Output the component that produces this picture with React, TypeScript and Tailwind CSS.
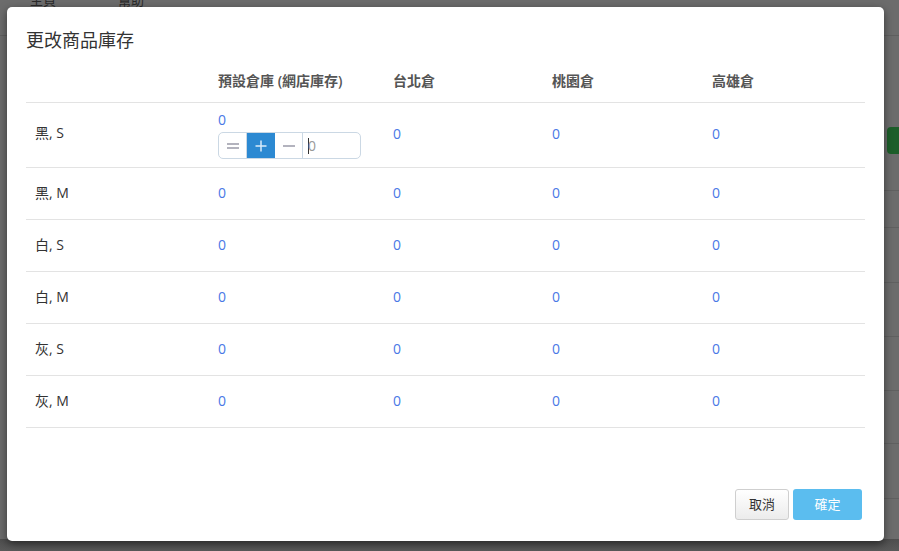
import React from "react";

const cols = ["預設倉庫 (網店庫存)", "台北倉", "桃園倉", "高雄倉"];
const rows = ["黑, S", "黑, M", "白, S", "白, M", "灰, S", "灰, M"];

function Num() {
  return <span className="text-[#4a78e6]">0</span>;
}

export default function App() {
  return (
    <div
      className="relative w-[899px] h-[551px] overflow-hidden bg-[#6c6c6c]"
      style={{ fontFamily: '"Open Sans", "Noto Sans CJK TC", sans-serif' }}
    >
      {/* background page hints */}
      <div className="absolute left-0 top-0 w-full h-[36px] border-b border-[#5f5f5f]" />
      <div className="absolute left-[30px] -top-[9px] text-[13px] text-[#2a2a2a]">主頁</div>
      <div className="absolute left-[118px] -top-[9px] text-[13px] text-[#2a2a2a]">幫助</div>
      <div className="absolute right-0 top-[127px] w-[12px] h-[27px] rounded-l-[4px] bg-[#1d5e2a]" />
      <div className="absolute right-0 top-[190px] w-[20px] border-t border-[#606060]" />
      <div className="absolute right-0 top-[227px] w-[20px] border-t border-[#606060]" />
      <div className="absolute right-0 top-[282px] w-[20px] border-t border-[#606060]" />
      <div className="absolute right-0 top-[336px] w-[20px] border-t border-[#606060]" />
      <div className="absolute right-0 top-[390px] w-[20px] border-t border-[#606060]" />
      <div className="absolute right-0 top-[443px] w-[20px] border-t border-[#606060]" />
      <div className="absolute right-0 top-[498px] w-[20px] border-t border-[#606060]" />
      <div className="absolute left-[313px] top-[546px] w-[97px] h-[10px] border border-[#4c4c4c] rounded-[2px]" />
      <div className="absolute left-0 bottom-0 w-full h-[12px] bg-gradient-to-b from-[#4e4e4e] to-[#5a5a5a]" />

      {/* modal */}
      <div className="absolute left-[7px] top-[7px] w-[877px] h-[534px] bg-white rounded-[5px] shadow-[0_3px_9px_rgba(0,0,0,0.5)] flex flex-col">
        <div className="pl-[19px] pt-[20px] h-[52px] text-[18px] text-[#333] leading-[26px]">更改商品庫存</div>
        <div className="px-[19px]">
          <div className="flex h-[44px] items-center border-b border-[#e3e3e3] text-[14px] font-semibold text-[#555]">
            <div className="w-[192px]" />
            <div className="w-[175px]">{cols[0]}</div>
            <div className="w-[159px]">{cols[1]}</div>
            <div className="w-[160px]">{cols[2]}</div>
            <div>{cols[3]}</div>
          </div>
          {rows.map((r, i) =>
            i === 0 ? (
              <div key={r} className="flex h-[65px] border-b border-[#e3e3e3] text-[14px] text-[#333]">
                <div className="w-[192px] pl-[9px] pt-[19px]">{r}</div>
                <div className="w-[175px] pt-[8px] flex flex-col">
                  <div className="leading-[18px]"><Num /></div>
                  <div className="mt-[3px] flex w-[143px] h-[27px] border border-[#cbd8e4] rounded-[5px] overflow-hidden">
                    <div className="w-[28px] flex items-center justify-center border-r border-[#cbd8e4]">
                      <svg width="14" height="10" viewBox="0 0 14 10"><path d="M1 3h12M1 7h12" stroke="#9a9aa8" strokeWidth="1.5" /></svg>
                    </div>
                    <div className="w-[28px] flex items-center justify-center bg-[#2c89d2]">
                      <svg width="12" height="12" viewBox="0 0 12 12"><path d="M6 0.5v11M0.5 6h11" stroke="#d9ebfa" strokeWidth="1.5" /></svg>
                    </div>
                    <div className="w-[28px] flex items-center justify-center border-r border-[#cbd8e4]">
                      <svg width="14" height="4" viewBox="0 0 14 4"><path d="M1 2h12" stroke="#9a9aa8" strokeWidth="1.5" /></svg>
                    </div>
                    <div className="flex-1 flex items-center pl-[5px] text-[14px] text-[#999]">
                      <span className="w-px h-[16px] bg-[#333] mr-[-1px]" />0
                    </div>
                  </div>
                </div>
                <div className="w-[159px] pt-[20px]"><Num /></div>
                <div className="w-[160px] pt-[20px]"><Num /></div>
                <div className="pt-[20px]"><Num /></div>
              </div>
            ) : (
              <div key={r} className="flex h-[52px] items-center pb-[3px] border-b border-[#e3e3e3] text-[14px] text-[#333]">
                <div className="w-[192px] pl-[9px]">{r}</div>
                <div className="w-[175px]"><Num /></div>
                <div className="w-[159px]"><Num /></div>
                <div className="w-[160px]"><Num /></div>
                <div><Num /></div>
              </div>
            )
          )}
        </div>
        <div className="flex-1" />
        <div className="flex justify-end gap-[4px] pr-[22px] pb-[21px]">
          <button className="w-[54px] h-[31px] border border-[#cfcfcf] rounded-[3px] bg-gradient-to-b from-white to-[#ececec] text-[13px] text-[#333]">取消</button>
          <button className="w-[69px] h-[31px] rounded-[3px] bg-[#5bbdef] text-[13px] text-white">確定</button>
        </div>
      </div>
    </div>
  );
}
